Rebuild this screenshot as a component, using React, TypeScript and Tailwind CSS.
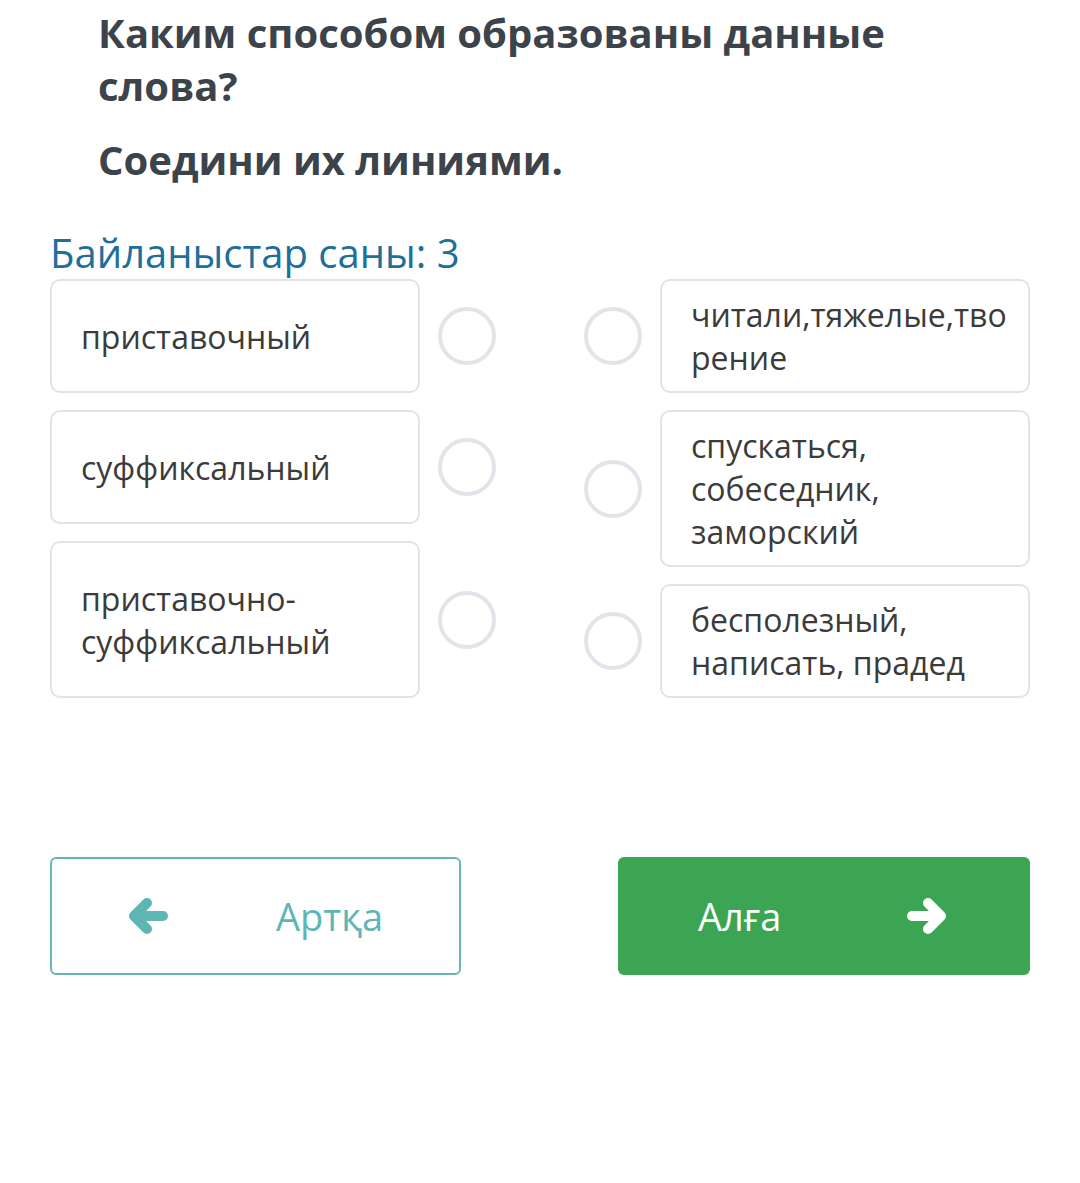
const left = [
  { text: 'приставочный', h: 'h-[114px]' },
  { text: 'суффиксальный', h: 'h-[114px]' },
  { text: 'приставочно-суффиксальный', h: 'h-[157px]' },
];

const right = [
  { text: 'читали,тяжелые,творение', h: 'h-[114px]' },
  { text: 'спускаться, собеседник, заморский', h: 'h-[157px]' },
  { text: 'бесполезный, написать, прадед', h: 'h-[114px]' },
];

function Dot() {
  return <div className="w-[58px] h-[58px] shrink-0 rounded-full border-[4px] border-[#e1e5e9]" />;
}

function Card({ text, h }: { text: string; h: string }) {
  return (
    <div
      className={`${h} w-[370px] shrink-0 flex items-center rounded-[10px] border-2 border-[#e3e3e3] pl-[29px] pr-[14px] text-[32px] leading-[43px] text-[#3b3b3b] break-words`}
    >
      <span className="min-w-0 w-full">{text}</span>
    </div>
  );
}

// thick rounded arrow, pointing right unless flipped
function Arrow({ flip }: { flip?: boolean }) {
  return (
    <svg width="42" height="38" viewBox="0 0 42 38" className={flip ? '-scale-x-100' : ''}>
      <path
        d="M6 19 H34 M22 6 L35 19 L22 32"
        fill="none"
        stroke="currentColor"
        strokeWidth="10"
        strokeLinecap="round"
        strokeLinejoin="round"
      />
    </svg>
  );
}

export default function App() {
  return (
    <div className="w-[1080px] min-h-[1183px] bg-white font-['Open_Sans',sans-serif]">
      {/* Question */}
      <div className="ml-[98px] w-[840px] pt-[6px] text-[40px] leading-[53px] font-bold text-[#3d434b]">
        <p>Каким способом образованы данные слова?</p>
        <p className="mt-[21px]">Соедини их линиями.</p>
      </div>

      <div className="px-[50px]">
        <p className="mt-[45px] text-[40px] leading-[44px] text-[#1f6f9b]">Байланыстар саны: 3</p>

        {/* Matching columns */}
        <div className="mt-[4px] flex justify-between">
          <div className="flex flex-col gap-[17px]">
            {left.map((item) => (
              <div key={item.text} className="flex items-center gap-[18px]">
                <Card text={item.text} h={item.h} />
                <Dot />
              </div>
            ))}
          </div>
          <div className="flex flex-col gap-[17px]">
            {right.map((item) => (
              <div key={item.text} className="flex items-center gap-[18px]">
                <Dot />
                <Card text={item.text} h={item.h} />
              </div>
            ))}
          </div>
        </div>

        {/* Navigation */}
        <div className="mt-[159px] flex justify-between">
          <button className="w-[411px] h-[118px] flex items-center justify-between pl-[75px] pr-[76px] rounded-[6px] border-2 border-[#66b8b7] bg-white text-[38px] text-[#5db6b4]">
            <Arrow flip />
            <span>Артқа</span>
          </button>
          <button className="w-[412px] h-[118px] flex items-center justify-between pl-[80px] pr-[82px] rounded-[6px] bg-[#3ca554] text-[38px] text-white">
            <span>Алға</span>
            <Arrow />
          </button>
        </div>
      </div>
    </div>
  );
}
